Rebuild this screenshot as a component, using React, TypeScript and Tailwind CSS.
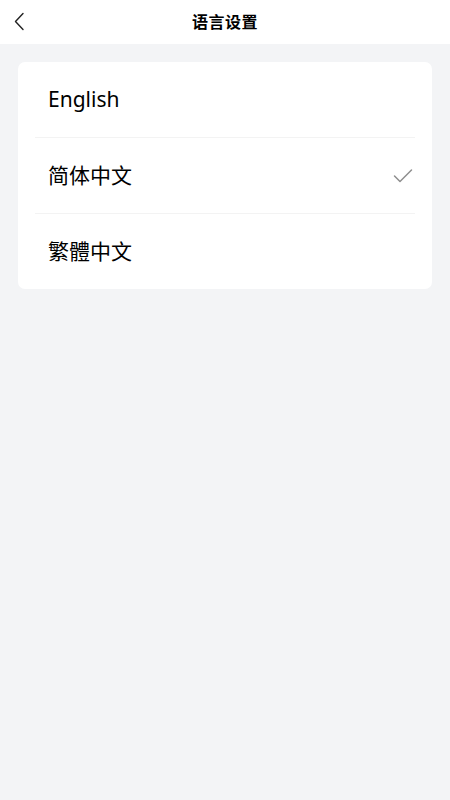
import React from "react";

const languages = [
  { label: "English", selected: false },
  { label: "简体中文", selected: true },
  { label: "繁體中文", selected: false },
];

export default function App() {
  return (
    <div
      className="min-h-[800px] bg-[#f3f4f6] text-black"
      style={{ fontFamily: '"Noto Sans", "Noto Sans CJK SC", sans-serif' }}
    >
      <header className="relative flex h-[44px] items-center justify-center bg-white">
        <button className="absolute left-[10px] top-[10px] flex h-[22px] w-[18px] items-center justify-center">
          <svg width="12" height="19" viewBox="0 0 12 19" fill="none">
            <path d="M10 1.5 L2.5 9.5 L10 17.5" stroke="#222" strokeWidth="1.4" strokeLinecap="round" strokeLinejoin="round" />
          </svg>
        </button>
        <h1 className="text-[16px] font-bold tracking-[0.5px]">语言设置</h1>
      </header>

      <div className="px-[18px] pt-[18px]">
        <ul className="rounded-[7px] bg-white px-[17px]">
          {languages.map((lang, i) => (
            <li
              key={lang.label}
              className={`flex items-center justify-between pl-[13px] pr-[2px] ${i > 0 ? "h-[76px] border-t border-[#f3f3f3]" : "h-[75px]"}`}
            >
              <span className="text-[21px] leading-none">{lang.label}</span>
              {lang.selected && (
                <svg width="20" height="16" viewBox="0 0 20 16" fill="none">
                  <path d="M1.5 8 L7 13.5 L18.5 2" stroke="#8e8e8e" strokeWidth="1.5" strokeLinecap="round" strokeLinejoin="round" />
                </svg>
              )}
            </li>
          ))}
        </ul>
      </div>
    </div>
  );
}
